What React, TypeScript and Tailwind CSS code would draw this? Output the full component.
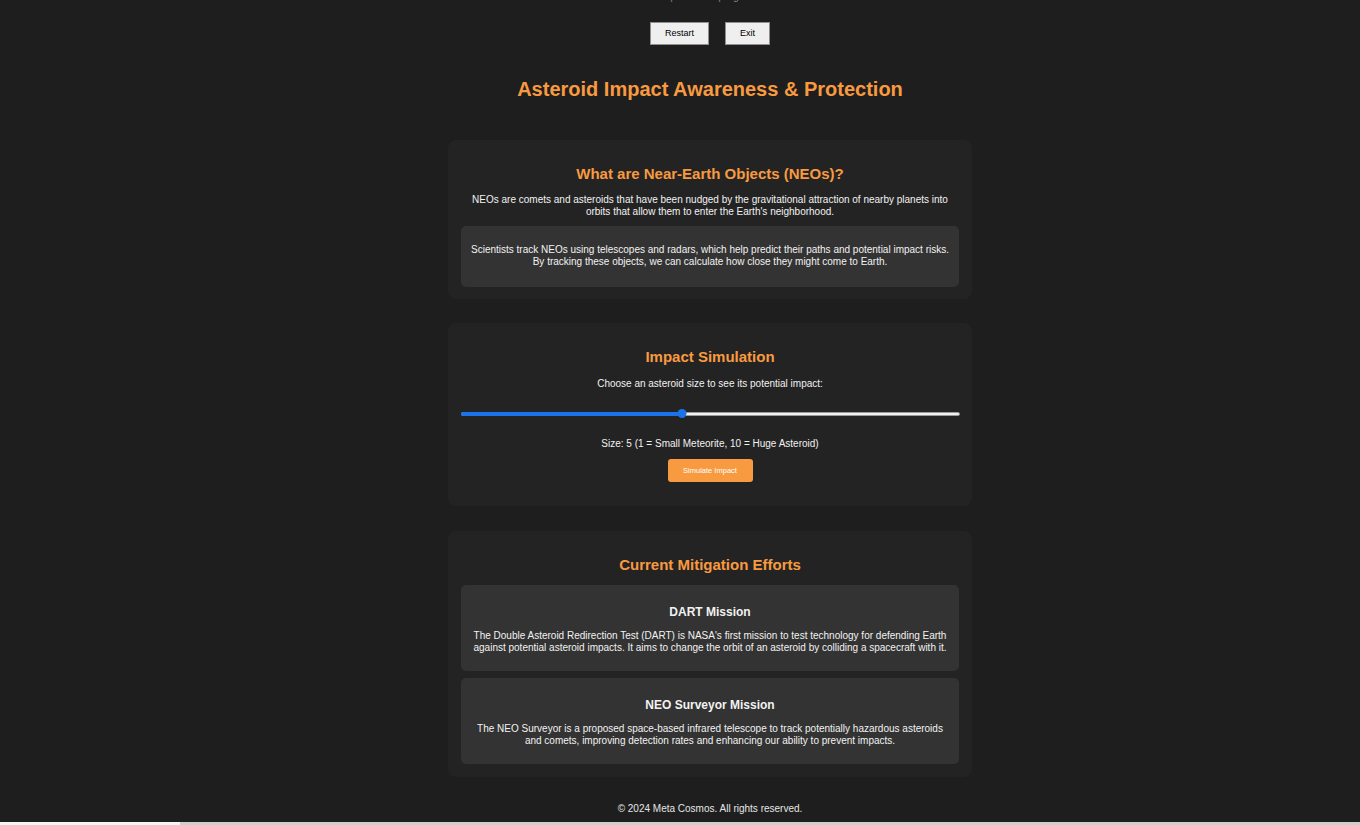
import { useState } from "react";

const font = "font-['Liberation_Sans',Arial,sans-serif]";

export default function App() {
    const [size] = useState(5);
    const pct = ((size - 1) / 9) * 100;

    return (
        <div className={`${font} min-h-screen bg-[#1e1e1e] text-[#f2f2f2] flex flex-col overflow-hidden`}>
            <div className="pl-[60px] flex flex-col items-center">
                {/* Scrolled-off status line */}
                <p className="mt-[-9px] text-[10px] leading-[12px] text-[#8a8a8a]">Score: 150 | Health: 3 | High Score: 1500</p>

                {/* Controls */}
                <div className="mt-[19px] flex gap-[16px]">
                    <button className="h-[23px] px-[14px] bg-[#efefef] border border-[#8f8f8f] text-black text-[9px]">Restart</button>
                    <button className="h-[23px] px-[14px] bg-[#efefef] border border-[#8f8f8f] text-black text-[9px]">Exit</button>
                </div>

                <h1 className="mt-[32px] text-[20px] leading-[24px] font-bold text-[#f89a40]">
                    Asteroid Impact Awareness &amp; Protection
                </h1>

                {/* NEO info */}
                <section className="mt-[39px] w-[524px] bg-[#232323] rounded-[8px] px-[13px] pt-[24px] pb-[12px] text-center">
                    <h2 className="text-[15px] leading-[19px] font-bold text-[#f89a40]">What are Near-Earth Objects (NEOs)?</h2>
                    <p className="mt-[11px] px-[10px] text-[10px] leading-[11.5px]">
                        NEOs are comets and asteroids that have been nudged by the gravitational attraction of nearby planets into orbits that allow them to enter the Earth's neighborhood.
                    </p>
                    <div className="mt-[9px] bg-[#333333] rounded-[5px] pt-[18px] pb-[20px] px-[8px]">
                        <p className="text-[10px] leading-[11.5px]">
                            Scientists track NEOs using telescopes and radars, which help predict their paths and potential impact risks. By tracking these objects, we can calculate how close they might come to Earth.
                        </p>
                    </div>
                </section>

                {/* Simulation */}
                <section className="mt-[24px] w-[524px] bg-[#232323] rounded-[8px] px-[13px] pt-[24px] pb-[24px] text-center flex flex-col items-center">
                    <h2 className="text-[15px] leading-[19px] font-bold text-[#f89a40]">Impact Simulation</h2>
                    <p className="mt-[12px] text-[10px] leading-[11.5px]">Choose an asteroid size to see its potential impact:</p>
                    <div className="mt-[19px] w-[499px] h-[10px] relative flex items-center">
                        <div className="w-full h-[4px] rounded-full bg-[#f0f0f0] border border-[#9a9a9a]" />
                        <div className="absolute left-0 h-[4px] rounded-full bg-[#1a73e8]" style={{ width: `${pct}%` }} />
                        <div className="absolute w-[9px] h-[9px] rounded-full bg-[#1a73e8] -translate-x-1/2" style={{ left: `${pct}%` }} />
                    </div>
                    <p className="mt-[19px] text-[10px] leading-[11.5px]">Size: {size} (1 = Small Meteorite, 10 = Huge Asteroid)</p>
                    <button className="mt-[10px] h-[23px] w-[85px] bg-[#f89a40] rounded-[3px] text-white text-[7.5px]">Simulate Impact</button>
                </section>

                {/* Mitigation */}
                <section className="mt-[25px] w-[524px] bg-[#232323] rounded-[8px] px-[13px] pt-[24px] pb-[13px] text-center">
                    <h2 className="text-[15px] leading-[19px] font-bold text-[#f89a40]">Current Mitigation Efforts</h2>
                    <div className="mt-[11px] flex flex-col gap-[7px]">
                        <div className="bg-[#333333] rounded-[5px] pt-[20px] pb-[18px] px-[8px]">
                            <h3 className="text-[12px] leading-[14px] font-bold">DART Mission</h3>
                            <p className="mt-[11px] text-[10px] leading-[11.5px]">
                                The Double Asteroid Redirection Test (DART) is NASA's first mission to test technology for defending Earth against potential asteroid impacts. It aims to change the orbit of an asteroid by colliding a spacecraft with it.
                            </p>
                        </div>
                        <div className="bg-[#333333] rounded-[5px] pt-[20px] pb-[18px] px-[8px]">
                            <h3 className="text-[12px] leading-[14px] font-bold">NEO Surveyor Mission</h3>
                            <p className="mt-[11px] px-[6px] text-[10px] leading-[11.5px]">
                                The NEO Surveyor is a proposed space-based infrared telescope to track potentially hazardous asteroids and comets, improving detection rates and enhancing our ability to prevent impacts.
                            </p>
                        </div>
                    </div>
                </section>

                <footer className="mt-[26px] text-[10px] leading-[12px] text-[#e6e6e6]">© 2024 Meta Cosmos. All rights reserved.</footer>
            </div>

            {/* Next section peeking in */}
            <div className="mt-[7px] w-full h-[4px] flex">
                <div className="w-[180px] bg-[#f5f5f5]" />
                <div className="flex-1 bg-[#cfcfcf]" />
            </div>
        </div>
    );
}
